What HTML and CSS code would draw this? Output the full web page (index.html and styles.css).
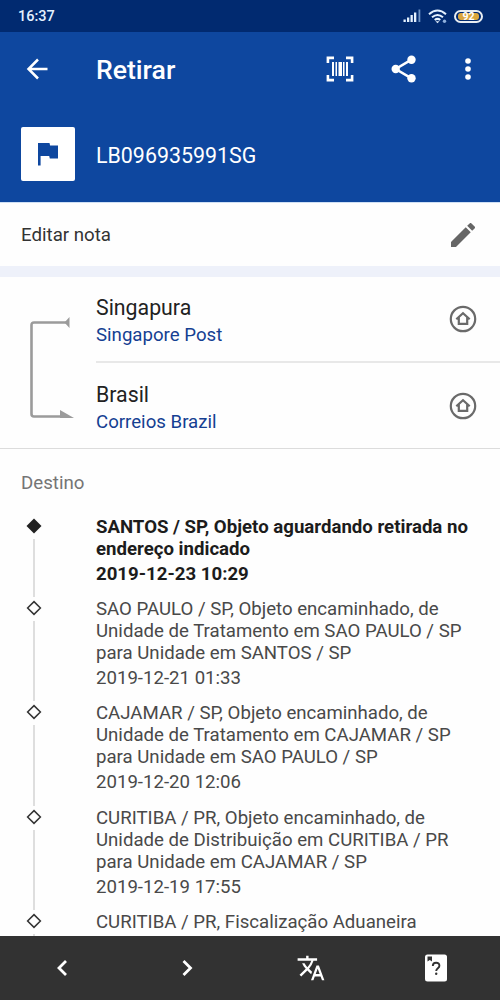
FILE: index.html
```html
<!DOCTYPE html>
<html lang="pt-BR">
<head>
<meta charset="utf-8">
<title>Retirar</title>
<link rel="stylesheet" href="styles.css">
</head>
<body>
<div class="app">
  <div class="status">
    <span class="clock">16:37</span>
    <div class="status-icons">
      <svg width="19" height="14" viewBox="0 0 19 14"><g fill="#e4f1ff"><rect x="0.5" y="10.5" width="2.300" height="2.500"/><rect x="4" y="8.500" width="2.300" height="4.500"/><rect x="7.500" y="6" width="2.300" height="7"/><rect x="11" y="3.500" width="2.300" height="9.500"/></g><rect x="15.500" y="0.500" width="1.800" height="12.500" fill="#6f93c5"/></svg>
      <svg class="wifi" width="20" height="15" viewBox="0 0 20 15"><g fill="none" stroke="#e4f1ff" stroke-width="2"><path d="M1 5.200Q9.500-2.200 18 5.200M4 8.300q5.500-4.600 11 0"/><path d="M6.700 11q2.800-2.200 5.600 0"/></g><path d="M7.500 12.200h4l-2 2z" fill="#e4f1ff"/><circle cx="16.500" cy="12.300" r="1.700" fill="#8fb0dd"/></svg>
      <div class="battery"><span>92</span></div>
    </div>
  </div>
  <header class="header">
    <div class="bar">
      <svg class="back" width="22" height="22" viewBox="0 0 22 22"><path d="M21.500 11H2.500M12 1.500L2.500 11l9.500 9.500" fill="none" stroke="#fff" stroke-width="2.500"/></svg>
      <h1 class="title">Retirar</h1>
      <svg width="28" height="26" viewBox="0 0 28 26"><path d="M1.900 7V1.900H8M20 1.900h6.100V7M26.100 19v5.100H20M8 24.100H1.900V19" fill="none" stroke="#fff" stroke-width="2.600"/><g fill="#fff"><rect x="6" y="6" width="2" height="14"/><rect x="9.500" y="6" width="1.500" height="14"/><rect x="12.500" y="6" width="3.500" height="14"/><rect x="17" y="6" width="1.500" height="14"/><rect x="20" y="6" width="2" height="14"/></g></svg>
      <svg class="share" width="26" height="28" viewBox="0 0 26 28"><path d="M20.500 4.700L4.700 14l15.800 9.300" fill="none" stroke="#fff" stroke-width="2.500"/><g fill="#fff"><circle cx="20.500" cy="4.700" r="4.200"/><circle cx="4.700" cy="14" r="4.200"/><circle cx="20.500" cy="23.300" r="4.200"/></g></svg>
      <svg class="more" width="6" height="22" viewBox="0 0 6 22"><g fill="#fff"><circle cx="3" cy="3" r="2.800"/><circle cx="3" cy="11" r="2.800"/><circle cx="3" cy="19" r="2.800"/></g></svg>
    </div>
    <div class="parcel">
      <div class="flag"><svg width="20" height="23" viewBox="0 0 20 23"><path d="M0 0h11.500l.6 2.500H20v13h-8.200l-.6-2.500H2.600v9.500H0z" fill="#0e479f"/></svg></div>
      <span class="code">LB096935991SG</span>
    </div>
  </header>
  <div class="note">
    <span>Editar nota</span>
    <svg width="24" height="24" viewBox="3 3 18 18"><path d="M3 17.250V21h3.750L17.810 9.940l-3.750-3.750L3 17.250zM20.710 7.040a1 1 0 0 0 0-1.410l-2.340-2.340a1 1 0 0 0-1.410 0l-1.830 1.830 3.750 3.750 1.830-1.830z" fill="#666"/></svg>
  </div>
  <section class="route">
    <svg class="route-line" width="46" height="104" viewBox="0 0 46 104"><path d="M39 6.500H5Q2.500 6.500 2.500 9v89q0 2.500 2.500 2.500h32" fill="none" stroke="#9b9b9b" stroke-width="2.600"/><path d="M35.500 6.500L40.500 1v11zM31 94l14 8H31z" fill="#9b9b9b"/></svg>
    <div class="carriers">
      <div class="carrier first">
        <div><div class="country">Singapura</div><div class="company">Singapore Post</div></div>
        <svg width="28" height="28" viewBox="0 0 28 28"><g fill="none" stroke="#6a6a6a" stroke-width="2.200"><circle cx="14" cy="14" r="12.200"/><path d="M7.300 14.300L14 8.200l6.700 6.100M9.800 12.500v6.300h8.400v-6.300"/></g></svg>
      </div>
      <div class="carrier second">
        <div><div class="country">Brasil</div><div class="company">Correios Brazil</div></div>
        <svg width="28" height="28" viewBox="0 0 28 28"><g fill="none" stroke="#6a6a6a" stroke-width="2.200"><circle cx="14" cy="14" r="12.200"/><path d="M7.300 14.300L14 8.200l6.700 6.100M9.800 12.500v6.300h8.400v-6.300"/></g></svg>
      </div>
    </div>
  </section>
  <main class="history">
    <h2 class="heading">Destino</h2>
    <div class="event current">
      <div class="mark"><svg width="16" height="16" viewBox="0 0 16 16"><path d="M8 .5L15.500 8 8 15.500.5 8z" fill="#222"/></svg><i></i></div>
      <div><p>SANTOS / SP, Objeto aguardando retirada no<br>endereço indicado</p><time>2019-12-23 10:29</time></div>
    </div>
    <div class="event">
      <div class="mark"><svg width="16" height="16" viewBox="0 0 16 16"><path d="M8 1.600L14.400 8 8 14.400 1.600 8z" fill="none" stroke="#333" stroke-width="1.500"/></svg><i></i></div>
      <div><p>SAO PAULO / SP, Objeto encaminhado, de<br>Unidade de Tratamento em SAO PAULO / SP<br>para Unidade em SANTOS / SP</p><time>2019-12-21 01:33</time></div>
    </div>
    <div class="event">
      <div class="mark"><svg width="16" height="16" viewBox="0 0 16 16"><path d="M8 1.600L14.400 8 8 14.400 1.600 8z" fill="none" stroke="#333" stroke-width="1.500"/></svg><i></i></div>
      <div><p>CAJAMAR / SP, Objeto encaminhado, de<br>Unidade de Tratamento em CAJAMAR / SP<br>para Unidade em SAO PAULO / SP</p><time>2019-12-20 12:06</time></div>
    </div>
    <div class="event">
      <div class="mark"><svg width="16" height="16" viewBox="0 0 16 16"><path d="M8 1.600L14.400 8 8 14.400 1.600 8z" fill="none" stroke="#333" stroke-width="1.500"/></svg><i></i></div>
      <div><p>CURITIBA / PR, Objeto encaminhado, de<br>Unidade de Distribuição em CURITIBA / PR<br>para Unidade em CAJAMAR / SP</p><time>2019-12-19 17:55</time></div>
    </div>
    <div class="event">
      <div class="mark"><svg width="16" height="16" viewBox="0 0 16 16"><path d="M8 1.600L14.400 8 8 14.400 1.600 8z" fill="none" stroke="#333" stroke-width="1.500"/></svg><i></i></div>
      <div><p>CURITIBA / PR, Fiscalização Aduaneira<br>Conferida</p></div>
    </div>
  </main>
  <nav class="nav">
    <svg width="28" height="28" viewBox="0 0 28 28"><path d="M18 7l-7 7 7 7" fill="none" stroke="#fff" stroke-width="2.800"/></svg>
    <svg width="28" height="28" viewBox="0 0 28 28"><path d="M10.500 7l7 7-7 7" fill="none" stroke="#fff" stroke-width="2.800"/></svg>
    <svg width="28" height="28" viewBox="0.500 0.500 23 23"><path d="M12.870 15.070l-2.540-2.510.03-.03A17.520 17.520 0 0 0 14.070 6H17V4h-7V2H8v2H1v1.990h11.170C11.500 7.920 10.440 9.750 9 11.350 8.070 10.320 7.300 9.190 6.690 8h-2c.73 1.630 1.730 3.170 2.980 4.560l-5.090 5.020L4 19l5-5 3.110 3.110.76-2.040zM18.500 10h-2L12 22h2l1.120-3h4.750L21 22h2l-4.500-12zm-2.620 7l1.620-4.330L19.120 17h-3.240z" fill="#fff"/></svg>
    <svg width="28" height="28" viewBox="0 0 28 28"><rect x="3" y="0.500" width="22" height="27" rx="2.500" fill="#fff"/><path d="M5.500 2.500h4.500v5l-2.200-1.600-2.300 1.600z" fill="#333"/><path d="M10.800 12q0-3.300 3.300-3.300t3.300 3c0 2.500-3.200 2.500-3.200 5.300" fill="none" stroke="#333" stroke-width="1.900"/><circle cx="14.200" cy="19.700" r="1.200" fill="#333"/></svg>
  </nav>
</div>
</body>
</html>
```
FILE: styles.css
```css
* { box-sizing: border-box; margin: 0; padding: 0; }
body { font-family: Roboto, sans-serif; background: #fefefe; }
svg { display: block; flex: none; }
.app { width: 500px; height: 1000px; display: flex; flex-direction: column; overflow: hidden; }
.status { flex: none; height: 32px; background: #012a70; display: flex; justify-content: space-between; align-items: center; padding: 0 17px 0 18px; }
.clock { color: #e4f1ff; font-size: 14.500px; font-weight: 500; }
.status-icons { display: flex; align-items: center; gap: 6px; }
.battery { width: 29px; height: 13px; border: 2px solid #e8edf2; border-radius: 7px; padding: 1px 2px; }
.battery span { display: block; height: 7px; background: #dba63c; border-radius: 3px; color: #fff; font-size: 10.500px; font-weight: 700; line-height: 8px; text-align: center; }
.header { flex: none; height: 170px; background: #0e479f; color: #fff; }
.bar { height: 75px; display: flex; align-items: center; padding: 0 29px 2px 26px; }
.title { font-size: 26.600px; font-weight: 500; line-height: 32px; margin: 3px auto 0 48px; }
.share { margin-left: 37px; }
.more { margin-left: 48px; }
.parcel { display: flex; align-items: center; padding: 20px 0 0 21px; gap: 21px; }
.flag { width: 54px; height: 54px; border-radius: 2px; background: #fff; display: flex; align-items: center; justify-content: center; }
.code { font-size: 21.400px; line-height: 26px; padding-top: 3px; }
.note { flex: none; height: 75px; border-bottom: 11px solid #eef1fa; border-top: 1px solid #cfe0f5; display: flex; align-items: center; justify-content: space-between; padding: 0 25px 0 21px; font-size: 18.700px; color: #333; }
.route { flex: none; height: 172px; display: flex; border-bottom: 1px solid #dcdcdc; }
.route-line { margin: 39px 21px 0 29px; }
.carriers { flex: 1; }
.carrier { height: 86px; display: flex; justify-content: space-between; align-items: flex-start; padding: 17px 23px 0 0; }
.carrier.first { border-bottom: 2px solid #e8e8e8; }
.carrier.second { padding-top: 18px; }
.carrier svg { margin-top: 11px; }
.country { font-size: 21.300px; line-height: 28px; color: #222; }
.company { font-size: 18.650px; line-height: 26px; color: #153f92; }
.history { flex: 1; min-height: 0; overflow: hidden; padding: 23px 0 0 21px; }
.heading { font-size: 18.700px; line-height: 22px; font-weight: 400; color: #757575; margin-bottom: 22px; }
.event { display: flex; color: #494949; font-size: 18.640px; line-height: 22px; white-space: nowrap; }
.mark { width: 75px; padding: 2px 0 1px 5px; display: flex; flex-direction: column; flex: none; }
.mark i { flex: 1; width: 2px; margin: 5px 0 0 7px; background: #dedede; }
.event time { display: block; padding-top: 3px; margin-bottom: 13.200px; }
.event.current { color: #1c1c1c; font-weight: 700; }
.nav { flex: none; height: 64px; background: #323232; display: grid; grid-template-columns: repeat(4, 1fr); place-items: center; padding-right: 2px; }
```
